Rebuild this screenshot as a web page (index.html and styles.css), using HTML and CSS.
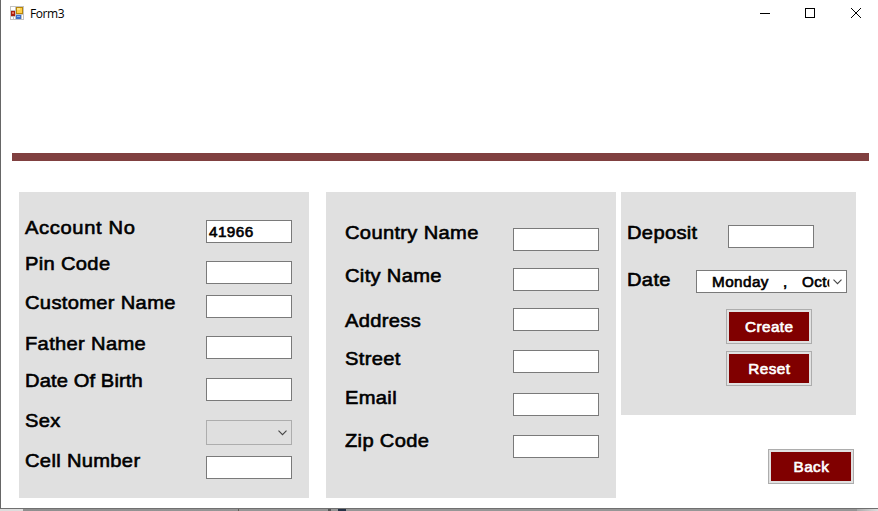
FILE: index.html
```html
<!DOCTYPE html>
<html lang="en">
<head>
<meta charset="utf-8">
<title>Form3</title>
<link rel="stylesheet" href="styles.css">
</head>
<body>
<div class="desktop">
<main class="window">
  <header class="titlebar">
    <svg class="app-icon" width="14" height="14" viewBox="0 0 14 14" shape-rendering="crispEdges">
      <path fill="#c3c3c3" d="M0 0h14v14H0z"/>
      <path fill="#fff" d="M1 1h4v3H1zM1 11h2v2H1zM4 11h1v2H4zM12 9h1v4h-1z"/>
      <path fill="#a8200f" d="M1 5h4v5H1z"/><path fill="#e8735c" d="M2 6h2v2H2z"/>
      <path fill="#b8860b" d="M6 1h7v7H6z"/><path fill="#ffd04a" d="M7 2h5v5H7z"/><path fill="#ffe68c" d="M7 2h3v2H7z"/>
      <path fill="#3c6fc8" d="M6 9h5v4H6z"/><path fill="#84b0f4" d="M7 10h3v1H7z"/>
    </svg>
    <span class="caption">Form3</span>
    <svg class="controls" width="102" height="11" viewBox="0 0 102 11" fill="none" stroke="#000">
      <path d="M0 5.5h10" shape-rendering="crispEdges"/>
      <path d="M45.5.5h9v9h-9z" shape-rendering="crispEdges"/>
      <path d="M91 0l10 10M101 0L91 10"/>
    </svg>
  </header>
  <div class="banner"></div>
  <div class="content">
    <section class="panel personal">
      <div class="labels">
        <label class="loose">Account No</label><label>Pin Code</label><label>Customer Name</label><label>Father Name</label><label class="tight">Date Of Birth</label><label>Sex</label><label>Cell Number</label>
      </div>
      <div class="fields">
        <div class="box"><span class="value">41966</span></div><div class="box"></div><div class="box"></div><div class="box"></div><div class="box"></div>
        <div class="box combo"><svg class="chevron" width="9" height="6" viewBox="0 0 9 6"><path d="M.5.7l4 4 4-4"/></svg></div>
        <div class="box"></div>
      </div>
    </section>
    <section class="panel location">
      <div class="labels">
        <label>Country Name</label><label>City Name</label><label>Address</label><label>Street</label><label>Email</label><label>Zip Code</label>
      </div>
      <div class="fields">
        <div class="box"></div><div class="box"></div><div class="box"></div><div class="box"></div><div class="box"></div><div class="box"></div>
      </div>
    </section>
    <div class="side">
      <section class="panel account">
        <div class="labels"><label>Deposit</label><label>Date</label></div>
        <div class="fields">
          <div class="box deposit"></div>
          <div class="box date"><span class="value day">Monday</span><span class="value comma">,</span><span class="value month">Octo</span><svg class="chevron" width="9" height="6" viewBox="0 0 9 6"><path d="M.5.7l4 4 4-4"/></svg></div>
          <button><span>Create</span></button>
          <button><span>Reset</span></button>
        </div>
      </section>
      <button class="back"><span>Back</span></button>
    </div>
  </div>
</main>
<div class="strip"></div>
</div>
</body>
</html>
```

FILE: styles.css
```css
* { box-sizing: border-box; }
body { margin: 0; background: #fff; color: #000; font-family: "Liberation Sans", Arial, sans-serif; overflow: hidden; }
.desktop { width: 878px; height: 511px; display: flex; flex-direction: column; background: #aaa; }
.window { height: 509px; background: #fff; border-left: 1px solid #666; border-bottom: 1px solid #707070; }
.titlebar { display: flex; align-items: flex-start; height: 28px; padding: 6px 16px 0 9px; }
.caption { margin-left: 6px; font: 12px/16px "Open Sans", "Noto Sans", sans-serif; letter-spacing: -.4px; }
.controls { margin: 2px 0 0 auto; }
.banner { height: 133px; margin: 0 9px 0 11px; border-bottom: 8px solid #804040; }
.content { display: flex; padding: 31px 0 0 18px; }
.panel { display: flex; background: #e0e0e0; height: 306px; }
.personal { width: 290px; margin-right: 17px; padding-left: 6px; }
.location { width: 290px; margin-right: 5px; padding-left: 19px; }
.account { width: 235px; height: 223px; padding-left: 6px; }
.labels { display: flex; flex-direction: column; flex: none; width: 181px; }
.location .labels { width: 168px; }
.account .labels { width: 69px; }
label { height: 24px; font-size: 19px; line-height: 24px; letter-spacing: .3px; white-space: nowrap; -webkit-text-stroke: .6px #000; transform: scaleX(1.06); transform-origin: left; }
.loose { letter-spacing: .6px; }
.tight { letter-spacing: .1px; }
.fields { display: flex; flex-direction: column; }
.box { width: 86px; height: 23px; flex: none; border: 1px solid #7a7a7a; background: #fff; padding-left: 2px; font-size: 14px; line-height: 22px; letter-spacing: .4px; -webkit-text-stroke: .6px #000; }
.value { display: inline-block; transform: scaleX(1.09); transform-origin: left; }
.chevron { fill: none; stroke: #444; stroke-width: 1.1; -webkit-text-stroke: 0; }
.combo { height: 25px; display: flex; justify-content: flex-end; align-items: center; padding-right: 4px; background: #dfdfdf; border-color: #adadad; }

.personal label:nth-child(1) { margin-top: 24px; }
.personal label:nth-child(2) { margin-top: 12px; }
.personal label:nth-child(3) { margin-top: 15px; }
.personal label:nth-child(4) { margin-top: 17px; }
.personal label:nth-child(5) { margin-top: 13px; }
.personal label:nth-child(6), .personal label:nth-child(7) { margin-top: 16px; }
.personal .box:nth-child(1) { margin-top: 28px; }
.personal .box:nth-child(2) { margin-top: 18px; }
.personal .box:nth-child(3) { margin-top: 11px; }
.personal .box:nth-child(4) { margin-top: 18px; }
.personal .box:nth-child(5), .personal .box:nth-child(6) { margin-top: 19px; }
.personal .box:nth-child(7) { margin-top: 11px; }

.location label:nth-child(1) { margin-top: 29px; }
.location label:nth-child(2) { margin-top: 19px; }
.location label:nth-child(3) { margin-top: 21px; }
.location label:nth-child(4) { margin-top: 14px; }
.location label:nth-child(5) { margin-top: 15px; }
.location label:nth-child(6) { margin-top: 19px; }
.location .box:nth-child(1) { margin-top: 36px; }
.location .box:nth-child(2), .location .box:nth-child(3) { margin-top: 17px; }
.location .box:nth-child(4), .location .box:nth-child(6) { margin-top: 19px; }
.location .box:nth-child(5) { margin-top: 20px; }

.account label:nth-child(1) { margin-top: 29px; }
.account label:nth-child(2) { margin-top: 23px; }
.deposit { margin: 33px 0 0 32px; }
.date { display: flex; width: 151px; margin: 22px 0 16px; padding: 0 4px 0 15px; }
.day { width: 71px; }
.comma { width: 19px; }
.month { width: 25px; overflow: hidden; }
.date .chevron { margin: 8px 0 0 auto; }
button { width: 86px; height: 35px; flex: none; margin: 0 0 7px 30px; padding: 1px 0 0; border: 1px solid #adadad; background: #800000; box-shadow: inset 0 0 0 2px #e1e1e1; color: #fff; font: 14px/30px "Liberation Sans", Arial, sans-serif; letter-spacing: .4px; -webkit-text-stroke: .6px #fff; }
button span { display: inline-block; transform: scaleX(1.09); }
.side { display: flex; flex-direction: column; }
.back { margin: 34px 0 0 147px; }
.strip { height: 2px; background: linear-gradient(90deg, #ddd 23px, #8f8f8f 23px, #969696 238px, #665f58 238px, #665f58 239px, #969696 239px, #969696 328px, #555 328px, #555 331px, #969696 331px, #969696 338px, #263246 338px, #263246 346px, #969696 346px, #969696 857px, #aaa 857px, #ddd); }
```
